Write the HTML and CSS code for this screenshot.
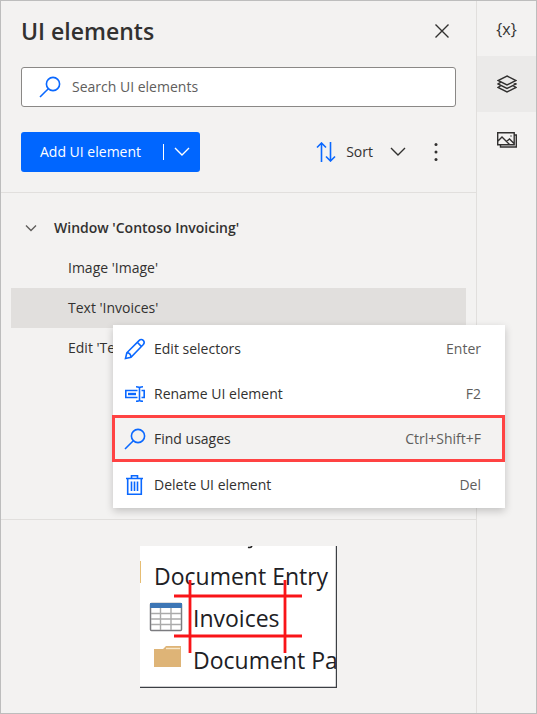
FILE: index.html
```html
<!DOCTYPE html>
<html lang="en">
<head>
<meta charset="utf-8">
<title>UI elements</title>
<link rel="stylesheet" href="styles.css">
</head>
<body>
<div class="app">
  <main class="panel">
    <header class="panel-header">
      <h1>UI elements</h1>
      <button class="icon-button" type="button" aria-label="Close">
        <svg width="14" height="14" viewBox="0 0 14 14"><path d="M.5.5l13 13M13.5.5l-13 13"/></svg>
      </button>
    </header>
    <div class="search">
      <svg class="blue" width="22" height="22" viewBox="0 0 22 22"><circle cx="14" cy="8" r="6.6"/><path d="M9.300 12.700L1 21"/></svg>
      <input type="search" aria-label="Search UI elements" placeholder="Search UI elements">
    </div>
    <div class="toolbar">
      <div class="split">
        <button class="add" type="button">Add UI element</button>
        <button class="add-more" type="button" aria-label="More ways to add">
          <svg width="16" height="10" viewBox="0 0 16 10"><path d="M1 1l7 7 7-7"/></svg>
        </button>
      </div>
      <button class="sort" type="button">
        <svg class="blue" width="20" height="20" viewBox="0 0 20 20"><path d="M5.500 20V1M1 5.500L5.500 1 10 5.500M14.500 0v19M10 14.500l4.500 4.500 4.500-4.500"/></svg>
        <span>Sort</span>
        <svg width="16" height="10" viewBox="0 0 16 10"><path d="M1 1l7 7 7-7"/></svg>
      </button>
      <button class="icon-button" type="button" aria-label="More options">
        <svg class="solid" width="4" height="20" viewBox="0 0 4 20"><circle cx="2" cy="2.500" r="1.500"/><circle cx="2" cy="10" r="1.500"/><circle cx="2" cy="17.500" r="1.500"/></svg>
      </button>
    </div>
    <section class="tree">
      <div class="row group">
        <svg width="12" height="8" viewBox="0 0 12 8"><path d="M1 1.500l5 5 5-5"/></svg>
        <span>Window 'Contoso Invoicing'</span>
      </div>
      <div class="row">Image 'Image'</div>
      <div class="row selected">Text 'Invoices'
        <div class="menu">
          <button type="button">
            <svg class="blue" width="22" height="22" viewBox="0 0 22 22"><path d="M1.500 20.500l1.300-5.700L15 2.600c3-3 6.900 1 4.100 4.100L7 19.200zM2.800 14.800c2.300 0 4 1.900 4.200 4.400M13.300 4.300l4.200 4.300"/></svg>
            <span>Edit selectors</span><kbd>Enter</kbd>
          </button>
          <button type="button">
            <svg class="blue" width="22" height="22" viewBox="0 0 22 22"><path d="M13.500 7.500H1.800v7h11.700M17.500 7.500h2.700v7h-2.700M15.500 4v14M12 3.700c2 0 3.500.2 3.500 1.200 0-1 1.500-1.200 3.500-1.200M12 18.300c2 0 3.500-.2 3.500-1.200 0 1 1.500 1.200 3.500 1.200"/><path d="M4 11h8" stroke-width="2.400"/></svg>
            <span>Rename UI element</span><kbd>F2</kbd>
          </button>
          <button class="current" type="button">
            <svg class="blue" width="22" height="22" viewBox="0 0 22 22"><circle cx="14" cy="8" r="6.600"/><path d="M9.300 12.700L1 21"/></svg>
            <span>Find usages</span><kbd>Ctrl+Shift+F</kbd>
          </button>
          <button type="button">
            <svg class="blue" width="22" height="22" viewBox="0 0 22 22"><path d="M2 4.500h17M7.500 4.500V1.700h6v2.800M3.700 4.500v15.800h13.600V4.500M7.500 7.500v9.500M10.500 7.500v9.500M13.500 7.500v9.500"/></svg>
            <span>Delete UI element</span><kbd>Del</kbd>
          </button>
        </div>
      </div>
      <div class="row">Edit 'Text box'</div>
    </section>
    <section class="preview">
      <svg class="capture" width="197" height="142" viewBox="0 0 197 142" role="img" aria-label="Captured element">
        <rect width="197" height="142" fill="#fff"/>
        <path d="M108 1.300c2 .7 3.400-.3 4-1.300" stroke="#222" stroke-width="1.500" fill="none"/>
        <path d="M0 15h1v22H0z" fill="#e6bd73"/>
        <g class="capture-text"><text x="14" y="39">Document Entry</text><text x="53" y="81">Invoices</text><text x="53" y="123">Document Pa</text></g>
        <rect x="10.500" y="57.500" width="31" height="27" rx="1" fill="#fff" stroke="#7b7b7f" stroke-width="1.500"/>
        <path d="M10 57h32v5H10z" fill="#3d76b5"/>
        <path d="M11 67.500h30M11 73h30M11 78.500h30M20.500 62v22M31 62v22" stroke="#aaa" fill="none"/>
        <path d="M14 103h9l3-3h15v21H14z" fill="#deb477"/><path d="M26 102.500h14" stroke="#f8e8cb"/>
        <path d="M34 50h128M34 90h128M50 34v73M145 34v73" stroke="#f91418" stroke-width="2.800" fill="none"/>
        <path d="M0 141.500h196.500V0" stroke="#3c3f44" fill="none"/>
      </svg>
    </section>
  </main>
  <nav class="rail" aria-label="Panes">
    <button type="button" aria-label="Variables"><span class="braces">{x}</span></button>
    <button class="active" type="button" aria-label="UI elements">
      <svg width="20" height="18" viewBox="0 0 20 18"><path d="M10 1l9 4.500-9 4.500-9-4.500zM3.500 7.300L1 9l9 4.500L19 9l-2.500-1.700M3.500 10.800L1 12.500 10 17l9-4.500-2.500-1.700"/></svg>
    </button>
    <button type="button" aria-label="Images">
      <svg width="20" height="16" viewBox="0 0 20 16"><path d="M.700.700h16.500v12H.700zM17.200 3h2.100v12H3.500v-2.300M1 9l4-4 7.500 7.500M9.500 9.500L12.500 7l4.500 4.500M13.500 4h1"/></svg>
    </button>
  </nav>
</div>
</body>
</html>
```
FILE: styles.css
```css
* { box-sizing: border-box; }

body {
  margin: 0;
  background: #f3f2f1;
  color: #323130;
  font: 14px/20px "Open Sans", "Noto Sans", sans-serif;
}

button {
  border: 0;
  padding: 0;
  background: none;
  color: inherit;
  font: inherit;
}

svg {
  display: block;
  flex: none;
  fill: none;
  stroke: currentColor;
  stroke-width: 1.4;
}

.blue { color: #0a68ff; stroke-width: 1.6; }
.solid { fill: currentColor; stroke: none; }

.app {
  display: flex;
  min-height: 100vh;
  border: 1px solid #bdbdbd;
}

.panel {
  flex: 1;
  display: flex;
  flex-direction: column;
  min-width: 0;
}

.panel-header {
  display: flex;
  align-items: center;
  justify-content: space-between;
  height: 60px;
  padding: 0 20px;
}

h1 {
  margin: 0;
  font-size: 23px;
  line-height: 32px;
  font-weight: 600;
}

.icon-button {
  display: flex;
  align-items: center;
  justify-content: center;
  width: 28px;
  height: 32px;
}

.search {
  display: flex;
  align-items: center;
  gap: 11px;
  height: 40px;
  margin: 6px 20px 0;
  padding: 0 17px;
  border: 1px solid #8a8886;
  border-radius: 3px;
  background: #fff;
}

.search input {
  flex: 1;
  min-width: 0;
  padding: 0;
  border: 0;
  outline: 0;
  background: none;
  color: inherit;
  font: inherit;
}

.search input::placeholder { color: #605e5c; opacity: 1; }

.toolbar {
  display: flex;
  align-items: center;
  height: 86px;
  padding: 5px 26px 0 20px;
  border-bottom: 1px solid #e1dfdd;
}

.split {
  display: flex;
  align-items: center;
  height: 40px;
  margin-right: auto;
  border-radius: 3px;
  background: #0066ff;
  color: #fff;
}

.add { padding: 0 22px 0 19px; }

.add-more {
  display: flex;
  padding: 3px 10px;
  border-left: 1px solid #fff;
}

.sort {
  display: flex;
  align-items: center;
  gap: 10px;
  margin-right: 16px;
}

.sort span { margin-right: 7px; }

.tree {
  height: 327px;
  padding: 15px 10px 0;
  border-bottom: 1px solid #e1dfdd;
}

.row {
  position: relative;
  display: flex;
  align-items: center;
  height: 40px;
  padding-left: 57px;
}

.group {
  gap: 17px;
  padding-left: 14px;
  font-weight: 600;
}

.group svg { color: #605e5c; }
.selected { background: #e1dfdd; }

.menu {
  position: absolute;
  z-index: 1;
  top: 37px;
  left: 102px;
  width: 392px;
  padding: 1px 0;
  background: #fff;
  box-shadow: 0 3px 8px rgba(0, 0, 0, 0.2);
}

.menu button {
  display: flex;
  align-items: center;
  gap: 8px;
  width: 100%;
  height: 45px;
  padding: 0 24px 0 11px;
  text-align: left;
}

.menu kbd {
  margin-left: auto;
  color: #605e5c;
  font: inherit;
}

.menu .current {
  width: auto;
  min-width: calc(100% + 1px);
  height: 47px;
  margin: -1px 0 0 -1px;
  padding: 0 21px 0 9px;
  border: 3px solid #ff4343;
  background: #f3f2f1;
}

.preview {
  display: flex;
  justify-content: center;
  padding-top: 26px;
}

.capture { stroke: none; }

.capture-text {
  fill: #202024;
  font-family: "Open Sans", "Noto Sans", sans-serif;
  font-size: 23px;
}

.rail {
  width: 60px;
  border-left: 1px solid #e1dfdd;
}

.rail button {
  display: flex;
  align-items: center;
  justify-content: center;
  width: 100%;
  height: 56px;
}

.rail button:first-child { height: 55px; }
.rail .active { background: #ebeae9; }
.braces { font-size: 16px; }
```
